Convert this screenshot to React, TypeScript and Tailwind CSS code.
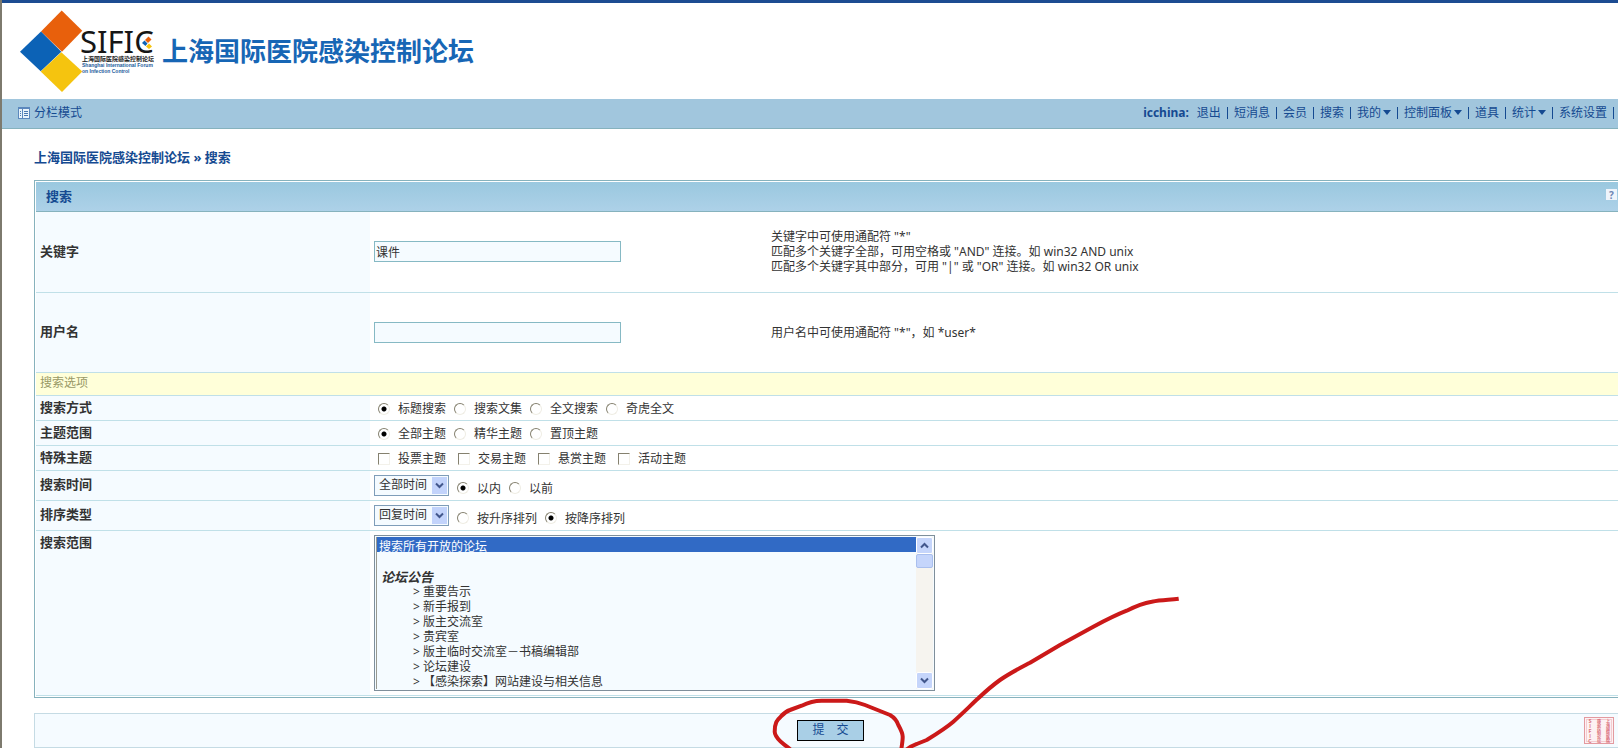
import { useState } from "react";
import type { ReactNode } from "react";

interface NavItem {
  label: string;
  menu?: boolean;
}

interface Choice {
  value: string;
  label: string;
}

const navItems: NavItem[] = [
  { label: "退出" },
  { label: "短消息" },
  { label: "会员" },
  { label: "搜索" },
  { label: "我的", menu: true },
  { label: "控制面板", menu: true },
  { label: "道具" },
  { label: "统计", menu: true },
  { label: "系统设置" },
];

const searchTypes: Choice[] = [
  { value: "title", label: "标题搜索" },
  { value: "blog", label: "搜索文集" },
  { value: "fulltext", label: "全文搜索" },
  { value: "qihoo", label: "奇虎全文" },
];

const threadFilters: Choice[] = [
  { value: "all", label: "全部主题" },
  { value: "digest", label: "精华主题" },
  { value: "top", label: "置顶主题" },
];

const specialThreads: Choice[] = [
  { value: "poll", label: "投票主题" },
  { value: "trade", label: "交易主题" },
  { value: "reward", label: "悬赏主题" },
  { value: "activity", label: "活动主题" },
];

const forums = [
  "重要告示",
  "新手报到",
  "版主交流室",
  "贵宾室",
  "版主临时交流室－书稿编辑部",
  "论坛建设",
  "【感染探索】网站建设与相关信息",
];

function Logo() {
  return (
    <svg width="140" height="84" viewBox="18 9 140 84" role="img" aria-label="SIFIC">
      <path d="M61.7 10.5 82.3 30.8 62 51.7 41 31.5Z" fill="#e8600c" />
      <path d="M41 31.5 61.3 51.7 40.7 71.3 20 51.7Z" fill="#0c62b6" />
      <path d="M61.3 52.3 82.3 71.5 62 92 40.7 71.5Z" fill="#f5c40f" />
      <text x="80" y="53" fontSize="31" fill="#161616" fontFamily="'Noto Sans', sans-serif">
        SIFIC
      </text>
      <path d="M148.500 36.500l3 3-3.500 3.500-3-3z" fill="#e8600c" />
      <path d="M144.500 40.500l3 3-2 2.500-3.500-3z" fill="#0c62b6" />
      <path d="M149 43.500l3 3-3 2.500-3-2.500z" fill="#f5c40f" />
      <text
        x="82"
        y="61"
        fontSize="6"
        fontWeight="700"
        fill="#222"
        fontFamily="'Noto Sans CJK SC', sans-serif"
      >
        上海国际医院感染控制论坛
      </text>
      <g fontSize="5" fontWeight="700" fill="#1d5c9c" fontFamily="'Liberation Sans', sans-serif">
        <text x="82" y="67">Shanghai International Forum</text>
        <text x="82" y="73">on Infection Control</text>
      </g>
    </svg>
  );
}

function ColumnsIcon() {
  return (
    <svg width="12" height="12" viewBox="0 0 12 12" aria-hidden="true">
      <rect x="0.5" y="0.5" width="11" height="11" fill="#eaf4fb" stroke="#5c88bd" />
      <path d="M0 0h12v2H0z" fill="#5c88bd" />
      <path d="M4.500 2v10" stroke="#5c88bd" />
      <path d="M2 4.500h1M2 6.500h1M2 8.500h1M6 4.500h4M6 6.500h4M6 8.500h4" stroke="#4a78b0" />
    </svg>
  );
}

function Chevron({ up }: { up?: boolean }) {
  return (
    <svg width="9" height="7" viewBox="0 0 9 7" aria-hidden="true">
      <path
        d={up ? "M1 5.500 4.500 2 8 5.500" : "M1 1.500 4.500 5 8 1.500"}
        fill="none"
        stroke="#42578c"
        strokeWidth="2"
      />
    </svg>
  );
}

// Small square stamp in the corner of the submit bar
function Seal() {
  return (
    <svg width="30" height="27" viewBox="0 0 30 27" role="img" aria-label="SIFIC">
      <rect x="0.5" y="0.5" width="29" height="26" fill="#fdf1f3" stroke="#e39aa0" />
      <rect x="2.5" y="2.5" width="25" height="22" fill="none" stroke="#f3ccd0" />
      <g
        fill="#d96f79"
        fontSize="4"
        fontWeight="700"
        fontFamily="'Noto Sans CJK SC', sans-serif"
        style={{ writingMode: "vertical-rl", textOrientation: "upright" }}
      >
        <text x="6" y="2" fontSize="5">SIFIC</text>
        <text x="15" y="2">感染控制论坛</text>
        <text x="24" y="2">上海国际医院</text>
      </g>
    </svg>
  );
}

function Row({ label, children, top }: { label: string; children: ReactNode; top?: boolean }) {
  return (
    <tr className="border-b border-[#c0e0e8]">
      <th
        scope="row"
        className={`bg-[#f5fbff] px-1 text-left text-[13px] leading-[18px] font-bold ${
          top ? "pt-0.5 align-top" : "pb-0.5 align-middle"
        }`}
      >
        {label}
      </th>
      {children}
    </tr>
  );
}

function Radio({
  name,
  choice,
  value,
  onChange,
}: {
  name: string;
  choice: Choice;
  value: string;
  onChange: (value: string) => void;
}) {
  return (
    <label className="flex items-center gap-2">
      <input
        type="radio"
        name={name}
        checked={value === choice.value}
        onChange={() => onChange(choice.value)}
        className="size-3 appearance-none rounded-full border border-t-[#85816f] border-r-[#efede4] border-b-[#efede4] border-l-[#85816f] bg-white checked:bg-[radial-gradient(circle,#000_2px,transparent_3px)]"
      />
      <span>{choice.label}</span>
    </label>
  );
}

function DropDown({ label, options }: { label: string; options: string[] }) {
  return (
    <div className="relative">
      <select
        aria-label={label}
        className="block h-[21px] w-[75px] appearance-none border border-[#7f9db9] bg-[#f5fbff] pl-1 text-xs leading-4"
      >
        {options.map((option) => (
          <option key={option}>{option}</option>
        ))}
      </select>
      <span className="pointer-events-none absolute top-0.5 right-0.5 flex h-[17px] w-[15px] items-center justify-center bg-[#c2d3fb]">
        <Chevron />
      </span>
    </div>
  );
}

export default function App() {
  const [keyword, setKeyword] = useState("课件");
  const [username, setUsername] = useState("");
  const [searchType, setSearchType] = useState("title");
  const [filter, setFilter] = useState("all");
  const [before, setBefore] = useState("0");
  const [order, setOrder] = useState("desc");

  return (
    <div className="relative min-h-screen overflow-hidden border-l-2 border-[#7d7a6e] bg-white font-['Noto_Sans','Noto_Sans_CJK_SC',sans-serif] text-xs leading-[15px] text-[#333]">
      {/* Header */}
      <header className="flex h-[99px] items-center border-t-[3px] border-[#1c4c92] pl-4">
        <Logo />
        <h1 className="ml-1 text-[26px] leading-8 font-bold text-[#1766b5]">
          上海国际医院感染控制论坛
        </h1>
      </header>

      {/* Menu bar */}
      <nav className="flex h-[30px] items-center justify-between border-b border-[#86b2bd] bg-[#a1c6dd] pr-1 pb-0.5 pl-4 text-[#154a91]">
        <a href="#columns" className="flex items-center gap-1">
          <ColumnsIcon />
          分栏模式
        </a>
        <div className="flex items-center">
          <a href="#profile" className="mr-0.5 font-bold">
            icchina:
          </a>
          {navItems.map((item) => (
            <span key={item.label} className="flex items-center">
              <a href={`#${item.label}`} className="flex items-center gap-0.5 px-1.5">
                {item.label}
                {item.menu && (
                  <svg width="8" height="5" viewBox="0 0 8 5" aria-hidden="true">
                    <path d="M0 0h8L4 5z" fill="currentColor" />
                  </svg>
                )}
              </a>
              <span className="h-3 w-px bg-[#154a91]" />
            </span>
          ))}
        </div>
      </nav>

      <main className="pl-8">
        <div className="pt-[21px] pb-[15px] text-[13px] leading-[15px] font-bold text-[#154a91]">
          <a href="#index">上海国际医院感染控制论坛</a> » 搜索
        </div>

        <form onSubmit={(e) => e.preventDefault()}>
          {/* Search panel */}
          <div className="border-y border-l border-[#86b2bd] pt-px pl-px">
            <div className="flex h-[30px] items-center justify-between border-b border-[#86b2bd] bg-linear-to-b from-[#9ac8df] to-[#add1e8] pr-px pl-2.5">
              <h2 className="text-[13px] font-bold text-[#154a91]">搜索</h2>
              <a
                href="#help"
                className="mb-1 flex size-[11px] items-center justify-center bg-[#eef4fb] text-[10px] leading-none font-bold text-[#6f86b4]"
              >
                ?
              </a>
            </div>

            <table className="w-full table-fixed border-collapse">
              <colgroup>
                <col className="w-[334px]" />
                <col className="w-[397px]" />
                <col />
              </colgroup>
              <tbody>
                <Row label="关键字">
                  <td className="h-20 px-1">
                    <input
                      type="text"
                      aria-label="关键字"
                      value={keyword}
                      onChange={(e) => setKeyword(e.target.value)}
                      className="block h-[21px] w-[247px] border border-[#86b9c4] bg-[#f5fbff] px-px"
                    />
                  </td>
                  <td className="px-1">
                    关键字中可使用通配符 "*"
                    <br />
                    匹配多个关键字全部，可用空格或 "AND" 连接。如 win32 AND unix
                    <br />
                    匹配多个关键字其中部分，可用 "|" 或 "OR" 连接。如 win32 OR unix
                  </td>
                </Row>
                <Row label="用户名">
                  <td className="h-20 px-1">
                    <input
                      type="text"
                      aria-label="用户名"
                      value={username}
                      onChange={(e) => setUsername(e.target.value)}
                      className="block h-[21px] w-[247px] border border-[#86b9c4] bg-[#f5fbff] px-px"
                    />
                  </td>
                  <td className="px-1">用户名中可使用通配符 "*"，如 *user*</td>
                </Row>
                <tr className="border-b border-[#c0e0e8] bg-[#ffffd9]">
                  <td colSpan={3} className="h-[23px] px-1 pb-0.5 text-[#999966]">
                    搜索选项
                  </td>
                </tr>
                <Row label="搜索方式">
                  <td colSpan={2} className="h-[25px] px-2 pt-0.5">
                    <div className="flex gap-2">
                      {searchTypes.map((choice) => (
                        <Radio
                          key={choice.value}
                          name="srchtype"
                          choice={choice}
                          value={searchType}
                          onChange={setSearchType}
                        />
                      ))}
                    </div>
                  </td>
                </Row>
                <Row label="主题范围">
                  <td colSpan={2} className="h-[25px] px-2 pt-0.5">
                    <div className="flex gap-2">
                      {threadFilters.map((choice) => (
                        <Radio
                          key={choice.value}
                          name="srchfilter"
                          choice={choice}
                          value={filter}
                          onChange={setFilter}
                        />
                      ))}
                    </div>
                  </td>
                </Row>
                <Row label="特殊主题">
                  <td colSpan={2} className="h-[25px] px-2 pt-0.5">
                    <div className="flex gap-3">
                      {specialThreads.map((choice) => (
                        <label key={choice.value} className="flex items-center gap-2">
                          <input
                            type="checkbox"
                            name="special"
                            value={choice.value}
                            className="size-3 appearance-none border border-t-[#85816f] border-r-[#f3f1ea] border-b-[#f3f1ea] border-l-[#85816f] bg-white checked:bg-[#42578c]"
                          />
                          <span>{choice.label}</span>
                        </label>
                      ))}
                    </div>
                  </td>
                </Row>
                <Row label="搜索时间">
                  <td colSpan={2} className="h-[30px] px-1">
                    <div className="flex items-center gap-2">
                      <DropDown label="搜索时间" options={["全部时间", "1 天", "1 周", "1 个月"]} />
                      <div className="flex gap-2 pt-1.5">
                        <Radio
                          name="before"
                          choice={{ value: "0", label: "以内" }}
                          value={before}
                          onChange={setBefore}
                        />
                        <Radio
                          name="before"
                          choice={{ value: "1", label: "以前" }}
                          value={before}
                          onChange={setBefore}
                        />
                      </div>
                    </div>
                  </td>
                </Row>
                <Row label="排序类型">
                  <td colSpan={2} className="h-[30px] px-1">
                    <div className="flex items-center gap-2">
                      <DropDown label="排序类型" options={["回复时间", "发布时间", "回复数量"]} />
                      <div className="flex gap-2 pt-1.5">
                        <Radio
                          name="ascdesc"
                          choice={{ value: "asc", label: "按升序排列" }}
                          value={order}
                          onChange={setOrder}
                        />
                        <Radio
                          name="ascdesc"
                          choice={{ value: "desc", label: "按降序排列" }}
                          value={order}
                          onChange={setOrder}
                        />
                      </div>
                    </div>
                  </td>
                </Row>
                <Row label="搜索范围" top>
                  <td colSpan={2} className="px-1 py-1">
                    <div className="flex h-[156px] w-[561px] border border-[#7f8f9b] bg-[#f5fbff] p-px">
                      <select
                        size={10}
                        multiple
                        aria-label="搜索范围"
                        defaultValue={["all"]}
                        className="h-full min-w-0 flex-1 appearance-none overflow-hidden border-l border-[#9a9a90] bg-[#f5fbff] [scrollbar-width:none]"
                      >
                        <option
                          value="all"
                          className="h-[15px] min-h-0 p-0 pl-0.5 leading-[15px] checked:bg-[#316ac5] checked:bg-[linear-gradient(#316ac5,#316ac5)] checked:text-white"
                        >
                          搜索所有开放的论坛
                        </option>
                        <option value="" className="h-[15px] min-h-0 p-0"></option>
                        <option
                          disabled
                          className="h-[15px] min-h-0 p-0 pl-1 text-[13px] leading-[15px] font-bold text-[#333] italic disabled:text-[#333]"
                        >
                          论坛公告
                        </option>
                        {forums.map((forum) => (
                          <option
                            key={forum}
                            value={forum}
                            className="h-[15px] min-h-0 p-0 pl-9 leading-[15px]"
                          >
                            {`> ${forum}`}
                          </option>
                        ))}
                      </select>
                      {/* Scroll track */}
                      <div className="flex w-[17px] flex-col bg-[#f6f4ef]" aria-hidden="true">
                        <span className="flex h-[17px] items-center justify-center rounded-xs border border-white bg-[#c5d5fb]">
                          <Chevron up />
                        </span>
                        <span className="h-[14px] rounded-xs border border-[#a9bfee] bg-[#c5d5fb]" />
                        <span className="mt-auto flex h-[17px] items-center justify-center rounded-xs border border-white bg-[#c5d5fb]">
                          <Chevron />
                        </span>
                      </div>
                    </div>
                  </td>
                </Row>
              </tbody>
            </table>
            <div className="h-px bg-white" />
          </div>

          {/* Submit bar */}
          <div className="mt-[15px] flex h-[35px] items-center justify-between border-y border-l border-[#c5dbe4] bg-[#f5fbff] pr-1">
            <span className="flex-1" />
            <button
              type="submit"
              className="ml-3 h-[21px] w-[67px] border border-black bg-[#a9cfe6] text-xs leading-4 whitespace-pre text-[#154a91]"
            >
              提&#12288;交
            </button>
            <span className="flex flex-1 justify-end">
              <Seal />
            </span>
          </div>
        </form>
      </main>

      {/* Red pen marks over the submit button */}
      <svg
        className="pointer-events-none absolute top-[592px] left-[768px]"
        width="420"
        height="156"
        viewBox="0 0 420 156"
        fill="none"
        stroke="#cb1919"
        strokeWidth="4"
        strokeLinejoin="round"
        aria-hidden="true"
      >
        <path d="M22 159C17 154 13 152 10.700 149.700C7 146 4.700 143 4.700 139.700C4.700 131 7 128 10.700 124.700C14 121 17 119 20 118L31.700 113.700C38 110.500 44 108.700 51.700 108.700H76.700C84 109.500 90 111 95 113L120 123C125 126 127 129 128.300 133C131 138 132.700 141 132.700 144.700C132.700 149 132 153 131 159" />
        <path d="M136 158C141 154 144 153 146.700 152L156.700 148C168 141 176 136 183.300 129.700C193 121 201 113 208.300 106.300C216 99 223 93 230 88C240 81 250 76 260 70.700L290 53L323.300 34.700C336 28 347 22.500 356.700 18.700C366 14 374 11 381.700 9.700C392 7.500 399 8 408.700 6.700" />
      </svg>
    </div>
  );
}
